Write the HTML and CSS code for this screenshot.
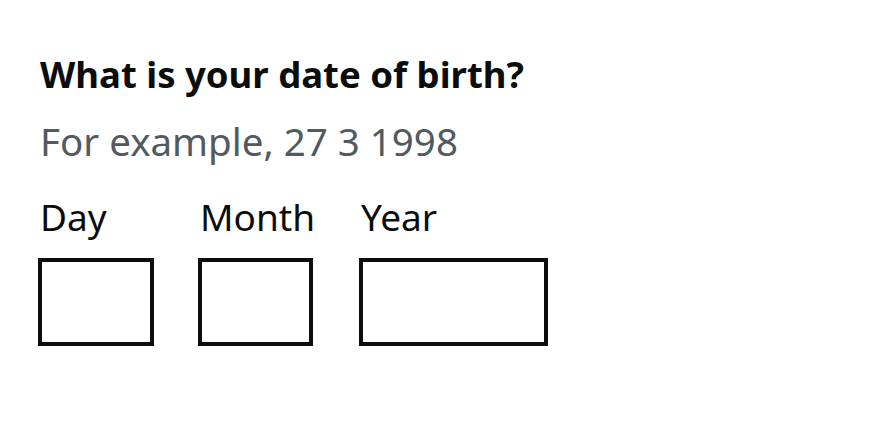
FILE: index.html
```html
<!DOCTYPE html>
<html lang="en">
<head>
<meta charset="utf-8">
<title>Date of birth</title>
<link rel="stylesheet" href="styles.css">
</head>
<body>
<main class="page">
  <fieldset class="fieldset">
    <legend class="legend">What is your date of birth?</legend>
    <div class="hint">For example, 27 3 1998</div>
    <div class="date-input">
      <div class="item">
        <label class="label" for="d">Day</label>
        <input class="input w-day" id="d" type="text">
      </div>
      <div class="item">
        <label class="label" for="m">Month</label>
        <input class="input w-month" id="m" type="text">
      </div>
      <div class="item">
        <label class="label" for="y">Year</label>
        <input class="input w-year" id="y" type="text">
      </div>
    </div>
  </fieldset>
</main>
</body>
</html>
```
FILE: styles.css
```css
html, body {
  margin: 0;
  padding: 0;
  background: #ffffff;
}
.page {
  padding: 49px 0 0 38px;
  font-family: "Noto Sans", "Liberation Sans", sans-serif;
  color: #0b0c0c;
}
.fieldset {
  margin: 0;
  padding: 0;
  border: 0;
  min-width: 0;
}
.legend {
  padding: 0 0 0 2px;
  font-size: 36.5px;
  font-weight: 700;
  line-height: 50px;
  margin: 0;
}
.hint {
  padding-left: 2px;
  margin-top: 18px;
  font-size: 38.5px;
  line-height: 48px;
  color: #505a5f;
}
.date-input {
  display: flex;
  margin-top: 28px;
}
.item {
  display: flex;
  flex-direction: column;
  align-items: flex-start;
  margin-right: 44px;
}
.label {
  padding-left: 2px;
  font-size: 37px;
  line-height: 48px;
  margin-bottom: 17px;
}
.input {
  box-sizing: border-box;
  height: 88px;
  border: 4px solid #0b0c0c;
  border-radius: 0;
  margin: 0;
  padding: 0 10px;
  background: #fff;
  font: inherit;
}
.w-day { width: 116px; }
.w-month { width: 115px; }
.w-year { width: 189px; }
```
